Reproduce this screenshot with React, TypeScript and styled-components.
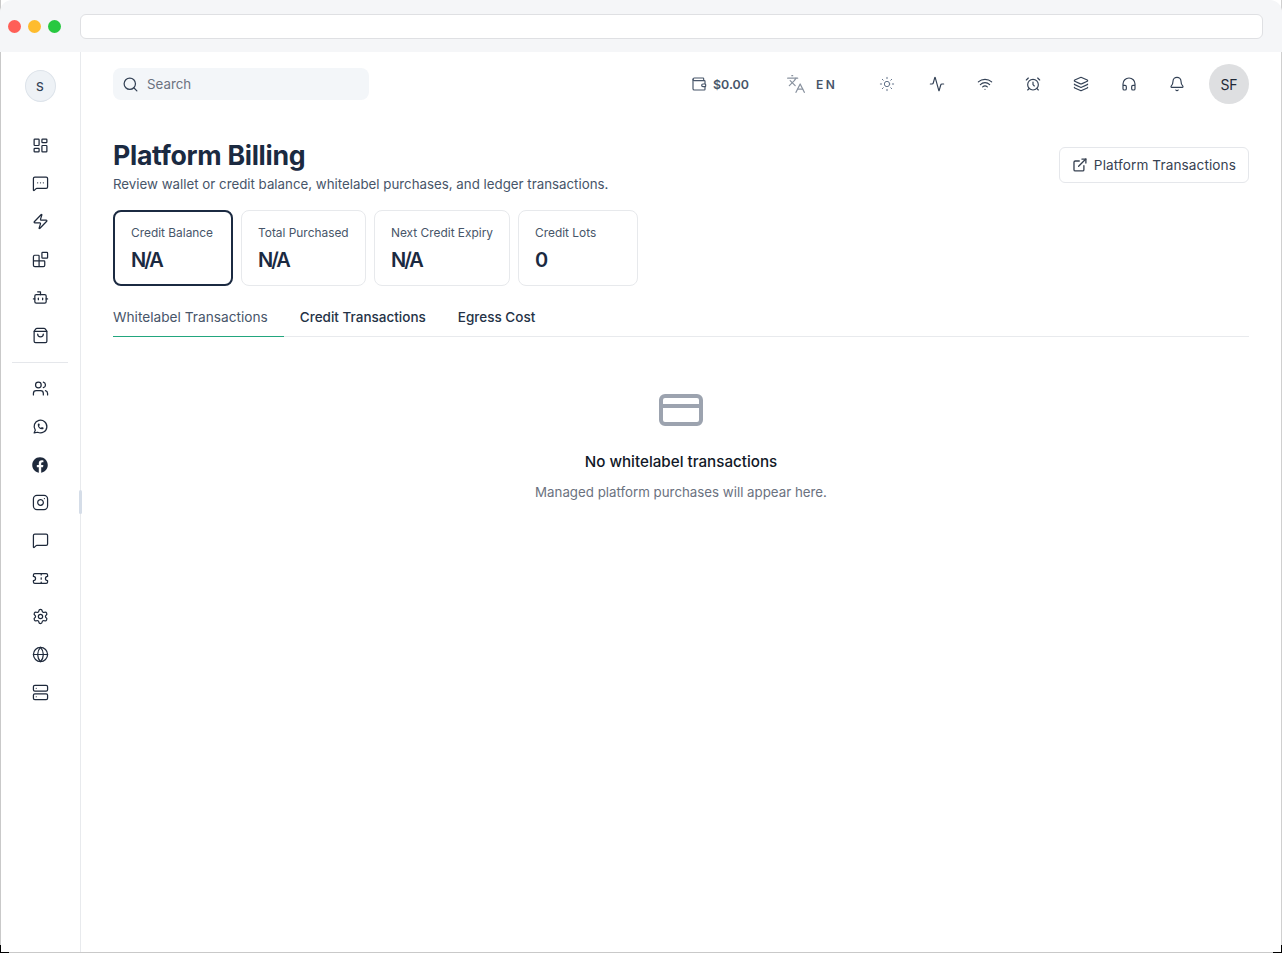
import React from "react";
import styled, { createGlobalStyle } from "styled-components";
import {
  Activity, AlarmClock, Bell, Blocks, Bot, CreditCard, ExternalLink, Globe, Headphones, Languages,
  Layers, LayoutDashboard, MessageSquare, MessageSquareMore, Search, Server, Settings, ShoppingBag,
  Sun, Ticket, Users, Wallet, Wifi, Zap, Instagram,
} from "lucide-react";
import { FaFacebook } from "react-icons/fa";
import { TbBrandWhatsapp } from "react-icons/tb";

const Global = createGlobalStyle`
  html, body { margin: 0; padding: 0; background: #fff; }
  * { box-sizing: border-box; }
  body { font-family: Inter, "Liberation Sans", sans-serif; color: #1e293b; }
`;

const Frame = styled.div`
  width: 1282px; height: 953px; overflow: hidden; background: #fff; position: relative;
`;
const Win = styled.div`
  width: 100%; height: 100%; display: flex; flex-direction: column; background: #fff;
  border: 1px solid #c9c9c9; border-top: 0; border-right-color: #d0d0d0;
`;
const Corner = styled.span<{ $right?: boolean }>`
  position: absolute; bottom: 0; ${p => (p.$right ? "right: 0;" : "left: 0;")} width: 9px; height: 8px;
  border-bottom: 1px solid #000;
  ${p => (p.$right ? "border-right: 1px solid #000;" : "border-left: 1px solid #000;")}
`;
const TitleBar = styled.div`
  height: 52px; flex: none; margin: 0 -1px; background: #f5f6f8; display: flex; align-items: center; padding: 0 19px 0 8px;
  border-radius: 12px 12px 0 0;
`;
const Dots = styled.div`display: flex; gap: 7px; width: 72px; flex: none;`;
const Dot = styled.span<{ $c: string }>`width: 13px; height: 13px; border-radius: 50%; background: ${p => p.$c};`;
const Address = styled.div`
  flex: 1; height: 25px; background: #fff; border: 1px solid #dfe0e3; border-radius: 6px;
`;
const Body = styled.div`flex: 1; display: flex; min-height: 0;`;
const Sidebar = styled.aside`
  width: 80px; flex: none; border-right: 1px solid #e8eaed; display: flex; flex-direction: column; align-items: center;
  padding: 18px 1px 0 0; position: relative;
`;
const Logo = styled.div`
  width: 31px; height: 32px; border-radius: 50%; background: #eef2f6; border: 1px solid #dde3ea;
  display: flex; align-items: center; justify-content: center; font-size: 12px; font-weight: 500; color: #334155; margin-bottom: 25px;
`;
const NavGroup = styled.nav`display: flex; flex-direction: column; align-items: center;`;
const NavItem = styled.div`
  width: 38px; height: 38px; padding-bottom: 1px; display: flex; align-items: center; justify-content: center; color: #1e293b;
`;
const NavRule = styled.hr`width: 56px; height: 1px; border: 0; background: #e5e7eb; margin: 7px 0 7px;`;
const Handle = styled.div`
  position: absolute; right: -2px; top: 438px; width: 3px; height: 24px; border-radius: 2px; background: #d5dde8;
`;
const Main = styled.main`flex: 1; padding: 16px 32px 0; min-width: 0;`;
const Topbar = styled.header`display: flex; align-items: center; height: 32px; justify-content: space-between;`;
const SearchBox = styled.div`
  width: 256px; height: 32px; background: #f3f6f9; border-radius: 8px; display: flex; align-items: center; gap: 8px;
  padding-left: 9px; color: #334155; font-size: 13.3px;
`;
const SearchText = styled.span`color: #6b7280;`;
const Tools = styled.div`display: flex; align-items: center; color: #334155;`;
const Balance = styled.div`
  display: flex; align-items: center; gap: 6px; font-size: 12.4px; font-weight: 600; color: #475569; width: 95px;
`;
const Lang = styled.div`
  display: flex; align-items: center; gap: 10px; color: #475569; font-size: 12px; font-weight: 600; letter-spacing: 2.4px; width: 75px;
`;
const LangIcon = styled.span`display: flex; color: #8a93a0;`;
const Tool = styled.div<{ $w?: number; $muted?: boolean }>`
  width: ${p => p.$w ?? 48}px; display: flex; justify-content: center; color: ${p => (p.$muted ? "#64748b" : "#334155")};
`;
const Avatar = styled.div`
  width: 40px; height: 40px; border-radius: 50%; background: #dedfe1; display: flex; align-items: center; justify-content: center;
  font-size: 14px; color: #1f2937; margin-left: 8px;
`;
const Head = styled.section`display: flex; justify-content: space-between; margin-top: 39px;`;
const H1 = styled.h1`margin: 0; font-size: 26.7px; line-height: 32px; font-weight: 700; color: #1b2a41; letter-spacing: -0.3px;`;
const Sub = styled.p`margin: 3px 0 0; font-size: 13.3px; line-height: 20px; color: #475569;`;
const LinkBtn = styled.button`
  font: inherit; font-size: 13.6px; color: #374151; background: #fff; border: 1px solid #e5e7eb; border-radius: 6px;
  height: 36px; width: 190px; flex: none; padding: 0 12px; display: flex; align-items: center; gap: 6px; margin-top: 8px;
  letter-spacing: 0.1px; white-space: nowrap;
`;
const Cards = styled.div`display: flex; gap: 8px; margin-top: 16px;`;
const Card = styled.div<{ $active?: boolean; $w: number }>`
  width: ${p => p.$w}px; height: 76px; border-radius: 8px; background: #fff;
  border: ${p => (p.$active ? "2px solid #1b2a41" : "1px solid #e7e9ec")};
  padding: ${p => (p.$active ? "13px 16px" : "14px 16px")};
`;
const CardLabel = styled.div`font-size: 11.9px; line-height: 16px; color: #475569; white-space: nowrap;`;
const CardValue = styled.div`font-size: 20px; line-height: 28px; font-weight: 600; color: #1b2a41; margin-top: 5px; letter-spacing: -2px;`;
const Tabs = styled.div`display: flex; border-bottom: 1px solid #e8eaed; margin-top: 15px; height: 36px;`;
const Tab = styled.div<{ $active?: boolean }>`
  font-size: ${p => (p.$active ? 13.7 : 13.5)}px; line-height: 20px; padding: 6px 16px 0; height: 36px; color: ${p => (p.$active ? "#475569" : "#243246")};
  font-weight: ${p => (p.$active ? 400 : 500)};
  border-bottom: ${p => (p.$active ? "1px solid #22a67e" : "0")};
  &:first-child { padding-left: 0; }
`;
const Empty = styled.section`display: flex; flex-direction: column; align-items: center; padding-top: 49px;`;
const EmptyIcon = styled.div`display: flex; color: #9ca3af;`;
const EmptyTitle = styled.h3`margin: 16px 0 0; font-size: 15.2px; line-height: 24px; font-weight: 500; color: #111827;`;
const EmptyText = styled.p`margin: 8px 0 0; font-size: 13.3px; line-height: 20px; color: #6b7280;`;

const top = [LayoutDashboard, MessageSquareMore, Zap, Blocks, Bot, ShoppingBag];
const bottom = [Users, TbBrandWhatsapp, FaFacebook, Instagram, MessageSquare, Ticket, Settings, Globe, Server];
const tools = [Activity, Wifi, AlarmClock, Layers, Headphones, Bell];
const cards = [
  { label: "Credit Balance", value: "N/A", w: 120, active: true },
  { label: "Total Purchased", value: "N/A", w: 125 },
  { label: "Next Credit Expiry", value: "N/A", w: 136 },
  { label: "Credit Lots", value: "0", w: 120 },
];

export default function App() {
  return (
    <Frame>
      <Global />
      <Win>
        <TitleBar>
          <Dots>
            <Dot $c="#ff5f57" />
            <Dot $c="#febc2e" />
            <Dot $c="#28c840" />
          </Dots>
          <Address />
        </TitleBar>
        <Body>
          <Sidebar>
            <Logo>S</Logo>
            <NavGroup>
              {top.map((I, i) => (
                <NavItem key={i}><I size={17} strokeWidth={1.75} /></NavItem>
              ))}
            </NavGroup>
            <NavRule />
            <NavGroup>
              {bottom.map((I, i) => (
                <NavItem key={i}><I size={I === FaFacebook ? 16 : 17} strokeWidth={1.75} /></NavItem>
              ))}
            </NavGroup>
            <Handle />
          </Sidebar>
          <Main>
            <Topbar>
              <SearchBox>
                <Search size={17} strokeWidth={1.75} />
                <SearchText>Search</SearchText>
              </SearchBox>
              <Tools>
                <Balance><Wallet size={16} strokeWidth={1.75} />$0.00</Balance>
                <Lang><LangIcon><Languages size={20} strokeWidth={1.5} /></LangIcon>EN</Lang>
                <Tool $w={52} $muted><Sun size={16} strokeWidth={1.5} /></Tool>
                {tools.map((I, i) => (
                  <Tool key={i}><I size={16} strokeWidth={1.75} /></Tool>
                ))}
                <Avatar>SF</Avatar>
              </Tools>
            </Topbar>
            <Head>
              <div>
                <H1>Platform Billing</H1>
                <Sub>Review wallet or credit balance, whitelabel purchases, and ledger transactions.</Sub>
              </div>
              <LinkBtn><ExternalLink size={16} />Platform Transactions</LinkBtn>
            </Head>
            <Cards>
              {cards.map(c => (
                <Card key={c.label} $w={c.w} $active={c.active}>
                  <CardLabel>{c.label}</CardLabel>
                  <CardValue>{c.value}</CardValue>
                </Card>
              ))}
            </Cards>
            <Tabs>
              <Tab $active>Whitelabel Transactions</Tab>
              <Tab>Credit Transactions</Tab>
              <Tab>Egress Cost</Tab>
            </Tabs>
            <Empty>
              <EmptyIcon><CreditCard size={48} strokeWidth={2} /></EmptyIcon>
              <EmptyTitle>No whitelabel transactions</EmptyTitle>
              <EmptyText>Managed platform purchases will appear here.</EmptyText>
            </Empty>
          </Main>
        </Body>
      </Win>
      <Corner />
      <Corner $right />
    </Frame>
  );
}
